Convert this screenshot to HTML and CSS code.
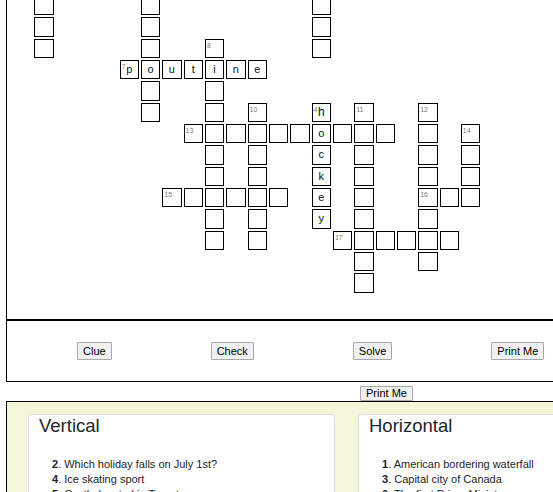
FILE: index.html
```html
<!DOCTYPE html>
<html lang="en">
<head>
<meta charset="utf-8">
<title>Canada Crossword</title>
<link rel="stylesheet" href="styles.css">
</head>
<body>
<div class="page">
  <section class="board">
    <div class="grid">
      <!-- row 0 -->
      <span class="c"></span><span></span><span></span><span></span><span></span><span class="c"></span><span></span><span></span><span></span><span></span><span></span><span></span><span></span><span class="c"></span><span></span><span></span><span></span><span></span><span></span><span></span><span></span>
      <!-- row 1 -->
      <span class="c"></span><span></span><span></span><span></span><span></span><span class="c"></span><span></span><span></span><span></span><span></span><span></span><span></span><span></span><span class="c"></span><span></span><span></span><span></span><span></span><span></span><span></span><span></span>
      <!-- row 2 -->
      <span class="c"></span><span></span><span></span><span></span><span></span><span class="c"></span><span></span><span></span><span class="c"><i class="n">8</i></span><span></span><span></span><span></span><span></span><span class="c"></span><span></span><span></span><span></span><span></span><span></span><span></span><span></span>
      <!-- row 3 -->
      <span></span><span></span><span></span><span></span><span class="c"><i class="n">7</i>p</span><span class="c">o</span><span class="c">u</span><span class="c">t</span><span class="c">i</span><span class="c">n</span><span class="c">e</span><span></span><span></span><span></span><span></span><span></span><span></span><span></span><span></span><span></span><span></span>
      <!-- row 4 -->
      <span></span><span></span><span></span><span></span><span></span><span class="c"></span><span></span><span></span><span class="c"></span><span></span><span></span><span></span><span></span><span></span><span></span><span></span><span></span><span></span><span></span><span></span><span></span>
      <!-- row 5 -->
      <span></span><span></span><span></span><span></span><span></span><span class="c"></span><span></span><span></span><span class="c"></span><span></span><span class="c"><i class="n">10</i></span><span></span><span></span><span class="c big"><i class="n">4</i>h</span><span></span><span class="c"><i class="n">11</i></span><span></span><span></span><span class="c"><i class="n">12</i></span><span></span><span></span>
      <!-- row 6 -->
      <span></span><span></span><span></span><span></span><span></span><span></span><span></span><span class="c"><i class="n">13</i></span><span class="c"></span><span class="c"></span><span class="c"></span><span class="c"></span><span class="c"></span><span class="c">o</span><span class="c"></span><span class="c"></span><span class="c"></span><span></span><span class="c"></span><span></span><span class="c"><i class="n">14</i></span>
      <!-- row 7 -->
      <span></span><span></span><span></span><span></span><span></span><span></span><span></span><span></span><span class="c"></span><span></span><span class="c"></span><span></span><span></span><span class="c">c</span><span></span><span class="c"></span><span></span><span></span><span class="c"></span><span></span><span class="c"></span>
      <!-- row 8 -->
      <span></span><span></span><span></span><span></span><span></span><span></span><span></span><span></span><span class="c"></span><span></span><span class="c"></span><span></span><span></span><span class="c">k</span><span></span><span class="c"></span><span></span><span></span><span class="c"></span><span></span><span class="c"></span>
      <!-- row 9 -->
      <span></span><span></span><span></span><span></span><span></span><span></span><span class="c"><i class="n">15</i></span><span class="c"></span><span class="c"></span><span class="c"></span><span class="c"></span><span class="c"></span><span></span><span class="c">e</span><span></span><span class="c"></span><span></span><span></span><span class="c"><i class="n">16</i></span><span class="c"></span><span class="c"></span>
      <!-- row 10 -->
      <span></span><span></span><span></span><span></span><span></span><span></span><span></span><span></span><span class="c"></span><span></span><span class="c"></span><span></span><span></span><span class="c">y</span><span></span><span class="c"></span><span></span><span></span><span class="c"></span><span></span><span></span>
      <!-- row 11 -->
      <span></span><span></span><span></span><span></span><span></span><span></span><span></span><span></span><span class="c"></span><span></span><span class="c"></span><span></span><span></span><span></span><span class="c"><i class="n">17</i></span><span class="c"></span><span class="c"></span><span class="c"></span><span class="c"></span><span class="c"></span><span></span>
      <!-- row 12 -->
      <span></span><span></span><span></span><span></span><span></span><span></span><span></span><span></span><span></span><span></span><span></span><span></span><span></span><span></span><span></span><span class="c"></span><span></span><span></span><span class="c"></span><span></span><span></span>
      <!-- row 13 -->
      <span></span><span></span><span></span><span></span><span></span><span></span><span></span><span></span><span></span><span></span><span></span><span></span><span></span><span></span><span></span><span class="c"></span><span></span><span></span><span></span><span></span><span></span>
    </div>
  </section>

  <div class="controls">
    <button class="btn">Clue</button>
    <button class="btn">Check</button>
    <button class="btn">Solve</button>
    <button class="btn">Print Me</button>
  </div>

  <div class="print-row">
    <button class="btn btn-small">Print Me</button>
  </div>

  <section class="clues">
    <div class="card">
      <h3 class="card-title">Vertical</h3>
      <ul class="clue-list">
        <li><b>2</b>. Which holiday falls on July 1st?</li>
        <li><b>4</b>. Ice skating sport</li>
        <li><b>5</b>. Castle located in Toronto</li>
        <li><b>8</b>. National animal of Canada</li>
      </ul>
    </div>
    <div class="card">
      <h3 class="card-title">Horizontal</h3>
      <ul class="clue-list">
        <li><b>1</b>. American bordering waterfall</li>
        <li><b>3</b>. Capital city of Canada</li>
        <li><b>6</b>. The first Prime Minister</li>
        <li><b>7</b>. Fries, gravy and cheese curds</li>
      </ul>
    </div>
  </section>
</div>
</body>
</html>
```

FILE: styles.css
```css
html {
  overflow: hidden;
}

body {
  margin: 0;
  background: #fff;
  font-family: "Liberation Sans", Arial, sans-serif;
  color: #000;
}

.page {
  width: 761px;
  margin-left: 6px;
}

.board {
  border: 1px solid #000;
  margin-top: -5px;
  padding: 0 0 26px 27.3px;
}

.grid {
  display: grid;
  grid-template-columns: repeat(21, 19.33px);
  grid-auto-rows: 19.33px;
  gap: 2px;
}

.c {
  position: relative;
  box-sizing: border-box;
  border: 1px solid #000;
  background: #fff;
  font-size: 11px;
  line-height: 17px;
  text-align: center;
  color: #111;
}

.c.big {
  font-size: 12px;
}

.n {
  position: absolute;
  top: 2px;
  left: 1px;
  font-style: normal;
  font-size: 7px;
  line-height: 1;
  color: #7a7a7a;
}

.controls {
  display: flex;
  align-items: center;
  gap: 99px;
  height: 60px;
  padding-left: 70px;
  border: 1px solid #000;
  border-top: 1px solid #000;
}

.btn {
  font-family: "Liberation Sans", Arial, sans-serif;
  font-size: 11px;
  line-height: 14px;
  padding: 1px 5px;
  margin: 0;
  color: #000;
  background: #f0f0f0;
  border: 1px solid #a9a9a9;
  border-radius: 1px;
}

.btn-small {
  line-height: 13px;
  padding: 0 5px;
}

.print-row {
  display: flex;
  justify-content: center;
  padding-top: 4px;
}

.clues {
  display: flex;
  gap: 23px;
  padding: 12px 0 30px 21px;
  background: #f5f5dc;
  border: 1px solid #000;
}

.card {
  width: 307px;
  box-sizing: border-box;
  padding: 0 10px 10px;
  background: #fff;
  border: 1px solid rgba(0, 0, 0, 0.125);
  border-radius: 4px;
  color: #212529;
}

.card-title {
  margin: 0 0 20px;
  font-size: 18.5px;
  line-height: 22px;
  font-weight: normal;
}

.clue-list {
  list-style: none;
  margin: 0;
  padding-left: 13px;
  font-size: 11px;
  line-height: 15px;
}

.clue-list b {
  font-weight: bold;
}
```
